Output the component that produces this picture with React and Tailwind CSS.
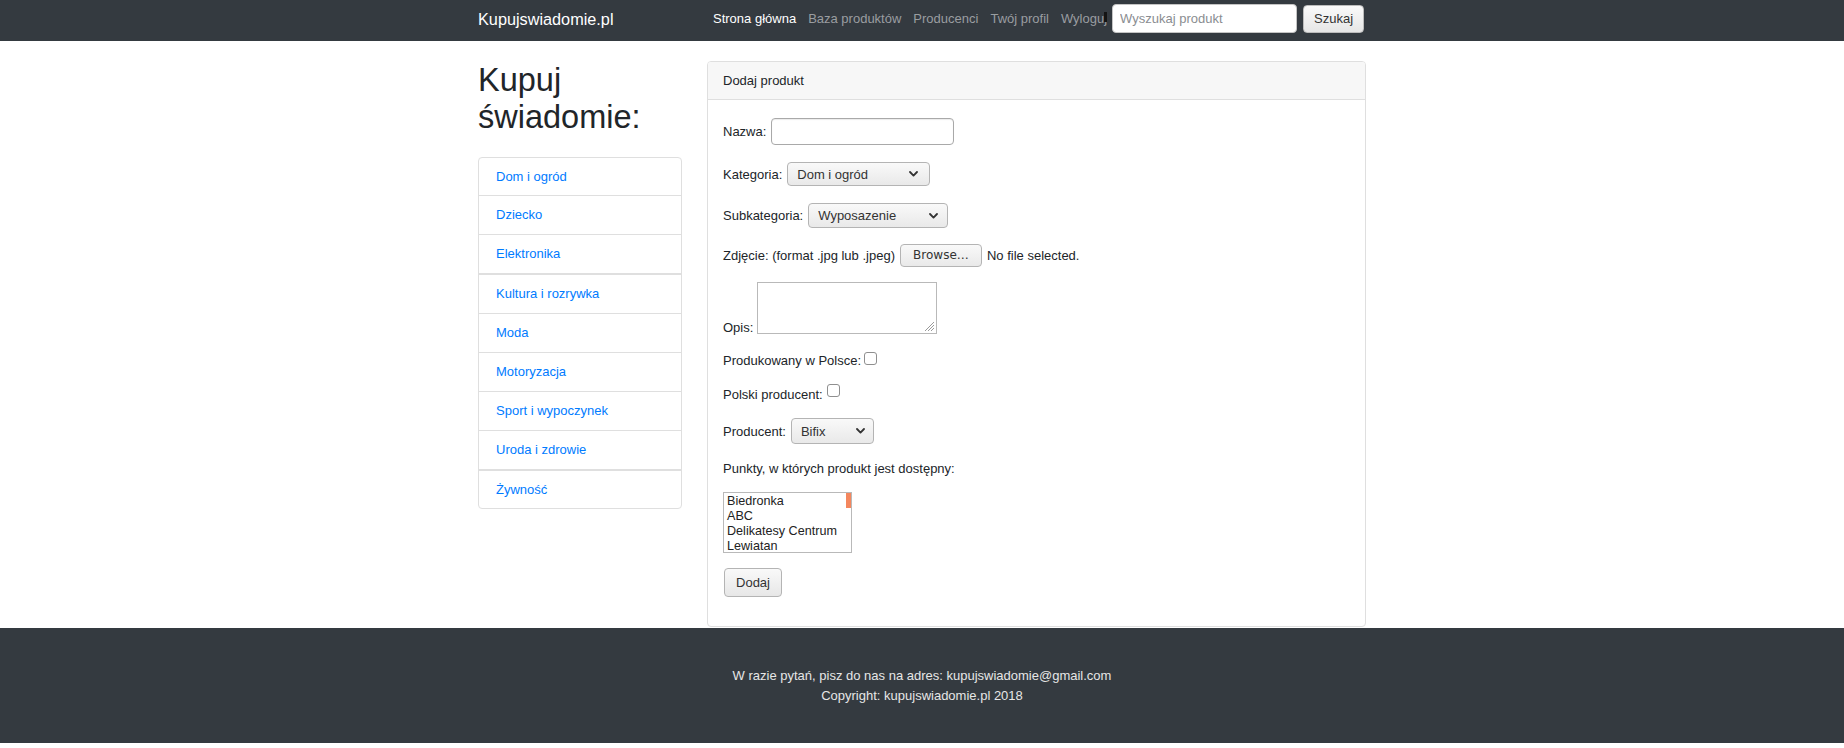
import React from "react";

function Chevron() {
  return (
    <svg width="9" height="6" viewBox="0 0 9 6" className="shrink-0">
      <polyline points="1,1 4.5,4.6 8,1" fill="none" stroke="#333" strokeWidth="1.8" strokeLinecap="round" strokeLinejoin="round" />
    </svg>
  );
}

function FakeSelect({ className, value }) {
  return (
    <div
      className={
        "flex items-center justify-between rounded-[4px] border border-[#b4b4b4] bg-linear-to-b from-[#f9f9f9] to-[#e9e9e9] pl-[9px] text-[#333] leading-[15px] " +
        className
      }
    >
      <span>{value}</span>
      <Chevron />
    </div>
  );
}

const cats = [
  { name: "Dom i ogród", cls: "h-[37px]" },
  { name: "Dziecko", cls: "h-[39px] border-t border-[#dfdfdf]" },
  { name: "Elektronika", cls: "h-[39px] border-t border-[#dfdfdf]" },
  { name: "Kultura i rozrywka", cls: "h-[40px] border-t-2 border-[#dfdfdf]" },
  { name: "Moda", cls: "h-[39px] border-t border-[#dfdfdf]" },
  { name: "Motoryzacja", cls: "h-[39px] border-t border-[#dfdfdf]" },
  { name: "Sport i wypoczynek", cls: "h-[39px] border-t border-[#dfdfdf]" },
  { name: "Uroda i zdrowie", cls: "h-[39px] border-t border-[#dfdfdf]" },
  { name: "Żywność", cls: "h-[39px] border-t-2 border-[#dfdfdf]" },
];

export default function App() {
  return (
    <div className="font-['Liberation_Sans',Arial,sans-serif] text-[13px] text-[#212529] bg-white min-h-[748px]">
      {/* Navbar */}
      <nav className="h-[41px] bg-[#343a40]">
        <div className="w-[888px] mx-auto h-full flex items-center pb-[4px]">
          <div className="w-[229px] shrink-0 whitespace-nowrap text-[16.25px] leading-[20px] text-white">Kupujswiadomie.pl</div>
          <ul className="flex shrink-0 items-center leading-[15px] whitespace-nowrap">
            <li className="px-[6px] text-white">Strona główna</li>
            <li className="px-[6px] text-[#9a9da0]">Baza produktów</li>
            <li className="px-[6px] text-[#9a9da0]">Producenci</li>
            <li className="px-[6px] text-[#9a9da0]">Twój profil</li>
            <li className="relative pl-[6px] pr-[5px] text-[#9a9da0]">
              Wyloguj
              <span className="absolute right-[5px] top-[1px] w-[3px] h-[10px] bg-[#141414]" />
            </li>
          </ul>
          <div className="flex shrink-0 items-center">
            <input
              placeholder="Wyszukaj produkt"
              className="w-[185px] h-[29px] rounded-[4px] border border-[#c4c4c4] bg-white pl-[7px] text-[13px] text-[#333] placeholder:text-[#8a8d91] outline-none"
            />
            <button className="ml-[6px] w-[61px] h-[28px] rounded-[4px] border border-[#bcbcbc] bg-linear-to-b from-[#fafafa] to-[#e6e6e6] text-[#333] text-[13px]">
              Szukaj
            </button>
          </div>
        </div>
      </nav>

      {/* Main */}
      <main className="w-[888px] mx-auto flex gap-[25px] pt-[20px] pb-[1px]">
        <aside className="w-[204px] shrink-0">
          <h1 className="text-[32.5px] leading-[37px] mt-[1px] mb-[21px] font-normal text-[#212529]">Kupuj świadomie:</h1>
          <div className="border border-[#dfdfdf] rounded-[4px] overflow-hidden">
            {cats.map((c) => (
              <div key={c.name} className={"flex items-center pl-[17px] text-[#007bff] " + c.cls}>
                {c.name}
              </div>
            ))}
          </div>
        </aside>

        <section className="w-[659px] h-[566px] shrink-0 border border-[#dfdfdf] rounded-[4px] overflow-hidden flex flex-col">
          <div className="h-[38px] shrink-0 flex items-center px-[15px] bg-[#f7f7f7] border-b border-[#dfdfdf]">Dodaj produkt</div>
          <div className="px-[15px] leading-[15px]">
            {/* Nazwa */}
            <div className="mt-[18px] h-[27px] flex items-center">
              <span>Nazwa:</span>
              <input className="ml-[5px] w-[183px] h-[27px] rounded-[4px] border border-[#a9a9a9] bg-white shadow-[inset_0_1px_1px_rgba(0,0,0,0.08)] outline-none" />
            </div>
            {/* Kategoria */}
            <div className="mt-[17px] h-[24px] flex items-center">
              <span>Kategoria:</span>
              <FakeSelect className="ml-[5px] w-[143px] h-[24px] pr-[11px]" value="Dom i ogród" />
            </div>
            {/* Subkategoria */}
            <div className="mt-[17px] h-[25px] flex items-center">
              <span>Subkategoria:</span>
              <FakeSelect className="ml-[5px] w-[140px] h-[25px] pr-[9px]" value="Wyposazenie" />
            </div>
            {/* Zdjecie */}
            <div className="mt-[16px] h-[23px] flex items-center">
              <span>Zdjęcie: (format .jpg lub .jpeg)</span>
              <button className="ml-[5px] w-[82px] h-[23px] rounded-[4px] border border-[#b4b4b4] bg-linear-to-b from-[#f9f9f9] to-[#e9e9e9] font-['DejaVu_Sans',sans-serif] text-[12px] text-[#333]">
                Browse…
              </button>
              <span className="ml-[5px]">No file selected.</span>
            </div>
            {/* Opis */}
            <div className="mt-[15px] h-[52px] flex items-end">
              <span className="leading-[13px]">Opis:</span>
              <div className="relative ml-[4px] w-[180px] h-[52px] border border-[#b9b9b9] bg-white">
                <svg width="11" height="11" viewBox="0 0 11 11" className="absolute right-[1px] bottom-[1px]">
                  <line x1="10" y1="1" x2="1" y2="10" stroke="#9a9a9a" strokeWidth="1" />
                  <line x1="10" y1="4" x2="4" y2="10" stroke="#9a9a9a" strokeWidth="1" />
                  <line x1="10" y1="7" x2="7" y2="10" stroke="#9a9a9a" strokeWidth="1" />
                </svg>
              </div>
            </div>
            {/* Produkowany */}
            <div className="mt-[19px] h-[15px] flex items-start">
              <span>Produkowany w Polsce:</span>
              <span className="ml-[3px] -mt-[1px] w-[13px] h-[13px] rounded-[3px] border border-[#8f8f8f] bg-white" />
            </div>
            {/* Polski producent */}
            <div className="mt-[19px] h-[15px] flex items-start">
              <span>Polski producent:</span>
              <span className="ml-[4px] -mt-[3px] w-[13px] h-[13px] rounded-[3px] border border-[#8f8f8f] bg-white" />
            </div>
            {/* Producent */}
            <div className="mt-[16px] h-[26px] flex items-center">
              <span>Producent:</span>
              <FakeSelect className="ml-[5px] w-[83px] h-[26px] pr-[8px]" value="Bifix" />
            </div>
            {/* Punkty */}
            <div className="mt-[17px] h-[15px]">Punkty, w których produkt jest dostępny:</div>
            {/* Multi select */}
            <div className="relative mt-[16px] w-[129px] h-[61px] border border-[#b9b9b9] bg-white pl-[3px] pt-[1px] text-[12.6px] leading-[15px] text-[#222] overflow-hidden">
              <div>Biedronka</div>
              <div>ABC</div>
              <div>Delikatesy Centrum</div>
              <div>Lewiatan</div>
              <span className="absolute right-0 top-0 w-[5px] h-[15px] bg-[#f4875e]" />
            </div>
            {/* Dodaj */}
            <button className="mt-[15px] ml-[1px] w-[58px] h-[29px] rounded-[4px] border border-[#b4b4b4] bg-linear-to-b from-[#f9f9f9] to-[#e7e7e7] text-[#333] text-[13px] block">
              Dodaj
            </button>
          </div>
        </section>
      </main>

      {/* Footer */}
      <footer className="h-[115px] bg-[#343a40]">
        <div className="w-[888px] mx-auto h-full flex flex-col items-center justify-center text-center text-[#e6e6e6] text-[13px] leading-[20px] whitespace-nowrap">
          <div>W razie pytań, pisz do nas na adres: kupujswiadomie@gmail.com</div>
          <div>Copyright: kupujswiadomie.pl 2018</div>
        </div>
      </footer>
    </div>
  );
}
